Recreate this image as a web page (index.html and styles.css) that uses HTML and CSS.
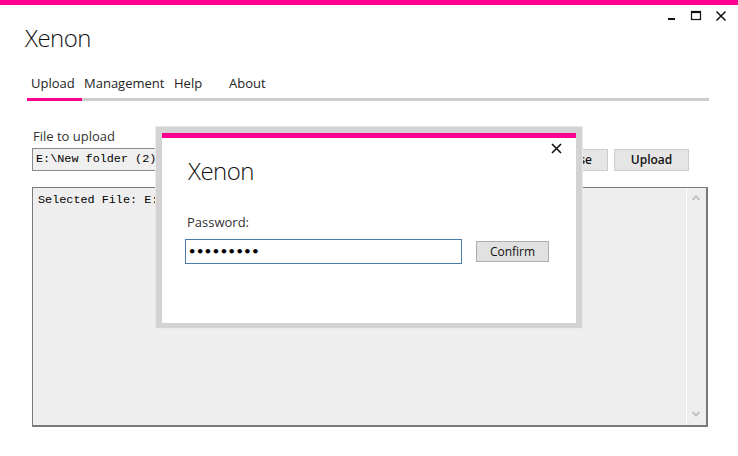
FILE: index.html
```html
<!DOCTYPE html>
<html>
<head>
<meta charset="utf-8">
<link rel="stylesheet" href="styles.css">
</head>
<body>
<div class="app">
  <div class="accent"></div>
  <div class="header">
    <h1 class="title">Xenon</h1>
    <div class="winctrl">
      <svg class="wc" width="12" height="12" viewBox="0 0 12 12"><rect x="3" y="8" width="7" height="2" fill="#111"/></svg>
      <svg class="wc" width="12" height="12" viewBox="0 0 12 12"><rect x="1.5" y="1.5" width="9" height="8" fill="none" stroke="#111" stroke-width="1.2"/><rect x="1.5" y="1.5" width="9" height="1.6" fill="#111"/></svg>
      <svg class="wc" width="12" height="12" viewBox="0 0 12 12"><path d="M1.5 1.5 L10.5 10.5 M10.5 1.5 L1.5 10.5" stroke="#111" stroke-width="1.5"/></svg>
    </div>
  </div>
  <nav class="tabs">
    <span class="tab tab-upload active">Upload</span>
    <span class="tab tab-mgmt">Management</span>
    <span class="tab tab-help">Help</span>
    <span class="tab tab-about">About</span>
  </nav>
  <div class="tabline"><div class="tabline-active"></div></div>

  <div class="content">
    <div class="label">File to upload</div>
    <div class="filerow">
      <div class="pathbox">E:\New folder (2)\Xenon\upload.txt</div>
      <button class="btn">Browse</button>
      <button class="btn">Upload</button>
    </div>
    <div class="output">
      <div class="output-text">Selected File: E:\New folder (2)\Xenon\upload.txt</div>
      <div class="scrollbar">
        <svg width="10" height="8" viewBox="0 0 10 8"><path d="M1.5 6 L5 2.5 L8.5 6" fill="none" stroke="#c2c2c2" stroke-width="2"/></svg>
        <svg width="10" height="8" viewBox="0 0 10 8"><path d="M1.5 2 L5 5.5 L8.5 2" fill="none" stroke="#c2c2c2" stroke-width="2"/></svg>
      </div>
    </div>
  </div>

  <div class="dialog">
    <div class="dialog-inner">
      <div class="dialog-accent"></div>
      <div class="dialog-close">
        <svg width="11" height="11" viewBox="0 0 11 11"><path d="M1 1 L10 10 M10 1 L1 10" stroke="#111" stroke-width="1.6"/></svg>
      </div>
      <div class="dialog-title">Xenon</div>
      <div class="dialog-label">Password:</div>
      <div class="dialog-row">
        <div class="pwbox">•••••••••</div>
        <button class="btn btn-confirm">Confirm</button>
      </div>
    </div>
  </div>
</div>
</body>
</html>
```

FILE: styles.css
```css
* { box-sizing: border-box; }
html, body { margin: 0; padding: 0; background: #ffffff; }
body { font-family: "Open Sans", "Noto Sans", sans-serif; color: #222; }

.app { position: relative; width: 738px; height: 456px; overflow: hidden; }

.accent { height: 5px; background: #ff0090; }

.header { display: flex; justify-content: space-between; align-items: flex-start; padding-left: 25px; }
.title { margin: 17px 0 0 0; font-size: 24px; line-height: 32px; font-weight: 300; letter-spacing: -0.5px; color: #111; }
.winctrl { display: flex; gap: 13px; padding: 5px 11px 0 0; }
.wc { display: block; }

.tabs { display: flex; margin: 20px 0 0 27px; font-size: 13px; line-height: 18px; color: #222; padding-bottom: 6px; }
.tab { display: block; }
.tab-upload { width: 55px; padding-left: 4px; }
.tab-mgmt { width: 92px; padding-left: 2px; }
.tab-help { width: 53px; padding-left: 0; }
.tab-about { padding-left: 2px; }

.tabline { margin-left: 27px; width: 682px; height: 3px; background: #cccccc; }
.tabline-active { width: 55px; height: 3px; background: #ff0090; }

.content { padding: 26px 30px 0 32px; }
.label { font-size: 13px; line-height: 18px; color: #333; padding-left: 1px; }

.filerow { display: flex; margin-top: 3px; height: 23px; align-items: flex-start; }
.pathbox { width: 495px; height: 23px; border: 1px solid #8a8a8a; background: #f0f0f0; font-family: "Liberation Mono", monospace; font-size: 11.8px; line-height: 21px; padding-left: 3px; white-space: nowrap; overflow: hidden; color: #000; }
.btn { font-family: "Open Sans", "Noto Sans", sans-serif; font-size: 12px; font-weight: 600; color: #111; background: #e5e5e5; border: 1px solid #cccccc; width: 75px; height: 22px; padding: 0; margin: 1px 0 0 6px; line-height: 20px; }

.output { display: flex; margin-top: 16px; width: 676px; height: 240px; border: 1px solid #7a7a7a; border-width: 1px 2px 2px 1px; background: #eeeeee; }
.output-text { flex: 1; font-family: "Liberation Mono", monospace; font-size: 11.8px; line-height: 16px; padding: 4px 5px; color: #000; }
.scrollbar { width: 18px; margin-right: 2px; border-left: 1px solid #ffffff; display: flex; flex-direction: column; justify-content: space-between; align-items: center; padding: 6px 0 7px 0; }
.scrollbar svg { display: block; }

.dialog { position: absolute; left: 155px; top: 126px; width: 428px; height: 203px; border: 1px solid #e9e9e9; background: #d3d3d3; padding: 6px 6px 5px 6px; }
.dialog-inner { position: relative; height: 190px; background: #ffffff; }
.dialog-accent { height: 5px; background: #ff0090; }
.dialog-close { position: absolute; right: 14px; top: 10px; }
.dialog-close svg { display: block; }
.dialog-title { margin: 17px 0 0 26px; font-size: 24px; line-height: 32px; font-weight: 300; letter-spacing: -0.5px; color: #111; }
.dialog-label { margin: 26px 0 0 25px; font-size: 13px; line-height: 18px; color: #333; }
.dialog-row { display: flex; align-items: center; margin: 8px 0 0 23px; }
.pwbox { width: 277px; height: 25px; border: 1px solid #4a7aa8; font-size: 13px; line-height: 23px; padding-left: 2px; letter-spacing: -0.4px; color: #000; font-family: "DejaVu Sans", sans-serif; font-weight: bold; }
.btn-confirm { width: 73px; height: 21px; margin: 0 0 0 14px; font-weight: 400; background: #e1e1e1; border: 1px solid #adadad; line-height: 19px; }
```
